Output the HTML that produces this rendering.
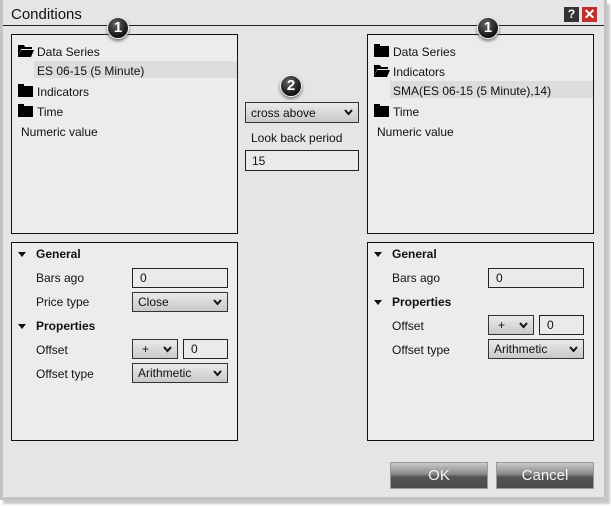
<!DOCTYPE html>
<html><head><style>
*{margin:0;padding:0;box-sizing:border-box}
body{width:611px;height:506px;background:#fff;position:relative;overflow:hidden;font-family:"Liberation Sans",sans-serif;font-size:12px;color:#111}
.win{position:absolute;left:0;top:0;width:607px;height:500px;background:#e5e5e7;border:3px solid #c3c3c3;border-top:0;box-shadow:3px 4px 2px #c8c8c8}
.a{position:absolute}
.box{position:absolute;border:1px solid #111;background:#ececee}
.t{position:absolute;line-height:14px;white-space:nowrap;margin-top:1px}
.b{font-weight:bold}
.sel{position:absolute;background:#dcdcdc}
.fold{position:absolute;width:15px;height:11px;background:#000}
.fold:before{content:"";position:absolute;left:0;top:-2px;width:6px;height:3px;background:#000}
.inp{position:absolute;border:1px solid #222;background:#eaeaea;line-height:19px;padding-left:7px}
.dd{position:absolute;border:1px solid #333;background:linear-gradient(#eaeaea,#c9c9c9);line-height:19px;padding-left:5px}
.dd svg{position:absolute;right:5px;top:6px}
.tri{position:absolute;width:0;height:0;border-left:4px solid transparent;border-right:4px solid transparent;border-top:5px solid #111}
.badge{position:absolute;width:22px;height:22px;border-radius:50%;background:radial-gradient(circle at 40% 30%,#666,#111 70%);border:1.5px solid #eee;box-shadow:0 2px 3px #777;color:#fff;font-weight:bold;font-size:15px;text-align:center;line-height:19px}
.btn{position:absolute;border:1px solid #999;background:linear-gradient(#c9c9c9,#888 45%,#555 55%,#4a4a4a);color:#f4f4f4;font-size:15px;text-align:center;line-height:26px}
</style></head><body>
<div class="win"></div>
<div class="t" style="left:11px;top:5px;font-size:15px;line-height:18px">Conditions</div>
<div class="a" style="left:3px;top:25px;width:601px;height:1px;background:#222"></div>
<div class="a" style="left:564px;top:7px;width:15px;height:15px;background:#333;color:#fff;font-weight:bold;font-size:12px;text-align:center;line-height:15px">?</div>
<div class="a" style="left:582px;top:7px;width:15px;height:15px;background:#c0302a;color:#fff;font-weight:bold;font-size:14px;text-align:center;line-height:15px">✕</div>

<div class="box" style="left:11px;top:34px;width:227px;height:200px"></div>
<svg class="a" style="left:18px;top:45px" width="16" height="12"><path d="M0 0h6l1 2h7v2H3L0 12z M3 5h13l-3 7H0z" fill="#000"/></svg>
<div class="t" style="left:37px;top:44px">Data Series</div>
<div class="sel" style="left:34px;top:61px;width:203px;height:17px"></div>
<div class="t" style="left:37px;top:63px">ES 06-15 (5 Minute)</div>
<div class="fold" style="left:18px;top:86px"></div><div class="t" style="left:37px;top:84px">Indicators</div>
<div class="fold" style="left:18px;top:106px"></div><div class="t" style="left:37px;top:104px">Time</div>
<div class="t" style="left:21px;top:124px">Numeric value</div>

<div class="box" style="left:11px;top:242px;width:227px;height:199px"></div>
<div class="tri" style="left:18px;top:252px"></div><div class="t b" style="left:36px;top:246px">General</div>
<div class="t" style="left:36px;top:270px">Bars ago</div>
<div class="inp" style="left:132px;top:268px;width:96px;height:20px">0</div>
<div class="t" style="left:36px;top:294px">Price type</div>
<div class="dd" style="left:132px;top:292px;width:96px;height:20px">Close<svg width="9" height="7"><path d="M1 1l3.5 4L8 1" stroke="#111" stroke-width="2" fill="none"/></svg></div>
<div class="tri" style="left:18px;top:324px"></div><div class="t b" style="left:36px;top:318px">Properties</div>
<div class="t" style="left:36px;top:342px">Offset</div>
<div class="dd" style="left:132px;top:339px;width:46px;height:20px;padding-left:9px">+<svg width="9" height="7"><path d="M1 1l3.5 4L8 1" stroke="#111" stroke-width="2" fill="none"/></svg></div>
<div class="inp" style="left:183px;top:339px;width:45px;height:20px">0</div>
<div class="t" style="left:36px;top:366px">Offset type</div>
<div class="dd" style="left:132px;top:363px;width:96px;height:20px">Arithmetic<svg width="9" height="7"><path d="M1 1l3.5 4L8 1" stroke="#111" stroke-width="2" fill="none"/></svg></div>

<div class="dd" style="left:245px;top:102px;width:114px;height:21px;line-height:20px">cross above<svg width="9" height="7"><path d="M1 1l3.5 4L8 1" stroke="#111" stroke-width="2" fill="none"/></svg></div>
<div class="t" style="left:251px;top:130px">Look back period</div>
<div class="inp" style="left:245px;top:150px;width:114px;height:21px;line-height:20px;padding-left:6px">15</div>

<div class="box" style="left:367px;top:34px;width:227px;height:200px"></div>
<div class="fold" style="left:374px;top:46px"></div><div class="t" style="left:393px;top:44px">Data Series</div>
<svg class="a" style="left:374px;top:65px" width="16" height="12"><path d="M0 0h6l1 2h7v2H3L0 12z M3 5h13l-3 7H0z" fill="#000"/></svg>
<div class="t" style="left:393px;top:64px">Indicators</div>
<div class="sel" style="left:390px;top:81px;width:203px;height:17px"></div>
<div class="t" style="left:393px;top:83px">SMA(ES 06-15 (5 Minute),14)</div>
<div class="fold" style="left:374px;top:106px"></div><div class="t" style="left:393px;top:104px">Time</div>
<div class="t" style="left:377px;top:124px">Numeric value</div>

<div class="box" style="left:367px;top:242px;width:227px;height:199px"></div>
<div class="tri" style="left:374px;top:252px"></div><div class="t b" style="left:392px;top:246px">General</div>
<div class="t" style="left:392px;top:270px">Bars ago</div>
<div class="inp" style="left:488px;top:268px;width:96px;height:20px">0</div>
<div class="tri" style="left:374px;top:300px"></div><div class="t b" style="left:392px;top:294px">Properties</div>
<div class="t" style="left:392px;top:318px">Offset</div>
<div class="dd" style="left:488px;top:315px;width:46px;height:20px;padding-left:9px">+<svg width="9" height="7"><path d="M1 1l3.5 4L8 1" stroke="#111" stroke-width="2" fill="none"/></svg></div>
<div class="inp" style="left:539px;top:315px;width:45px;height:20px">0</div>
<div class="t" style="left:392px;top:342px">Offset type</div>
<div class="dd" style="left:488px;top:339px;width:96px;height:20px">Arithmetic<svg width="9" height="7"><path d="M1 1l3.5 4L8 1" stroke="#111" stroke-width="2" fill="none"/></svg></div>

<div class="badge" style="left:107px;top:17px">1</div>
<div class="badge" style="left:477px;top:17px">1</div>
<div class="badge" style="left:280px;top:75px">2</div>

<div class="btn" style="left:390px;top:462px;width:98px;height:27px">OK</div>
<div class="btn" style="left:496px;top:462px;width:98px;height:27px">Cancel</div>
</body></html>
